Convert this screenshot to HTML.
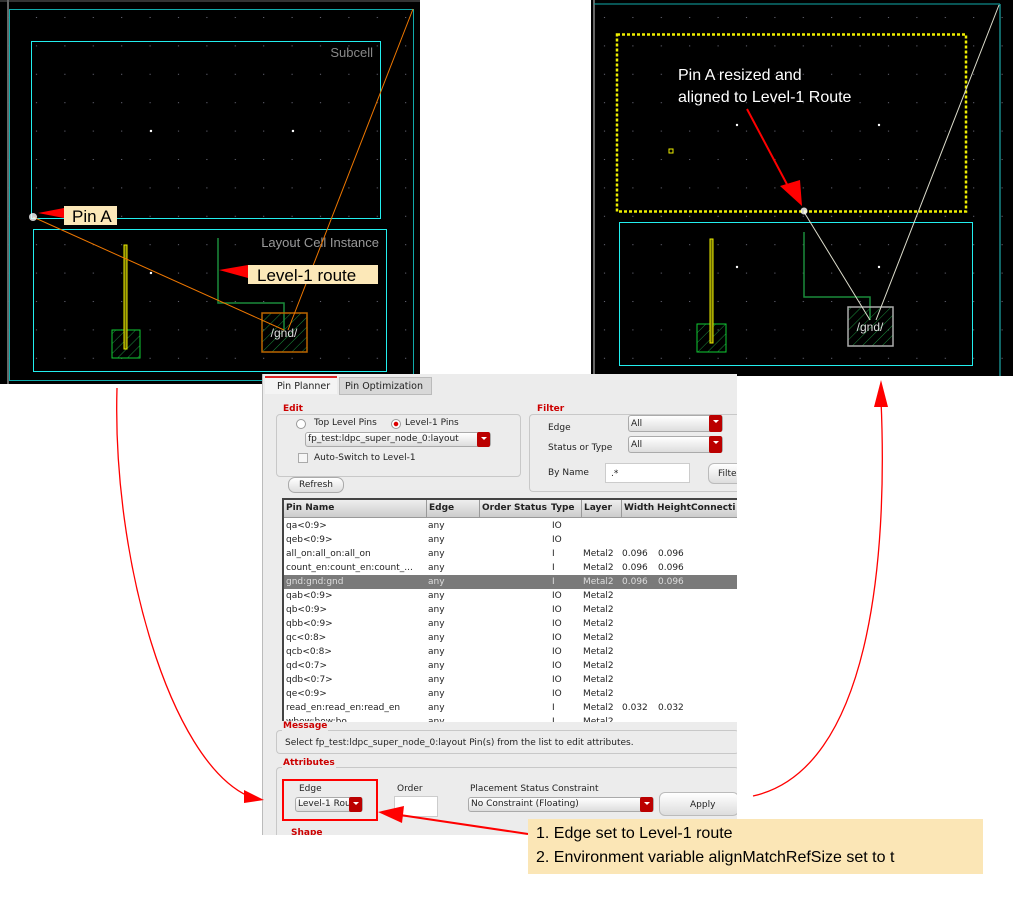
<!DOCTYPE html>
<html><head><meta charset="utf-8"><style>
body{margin:0;width:1013px;height:918px;background:#fff;position:relative;overflow:hidden;font-family:"Liberation Sans",sans-serif}
.a{position:absolute}
.dlg{font-family:"DejaVu Sans","Liberation Sans",sans-serif;font-size:9px;color:#222}
.sec{position:absolute;border:1px solid #c8c8c8;border-radius:4px}
.lbl{position:absolute;color:#c00;font-weight:bold;font-size:9px;background:#ececec;padding:0 1px}
.dd{position:absolute;background:linear-gradient(#fff,#ddd);border:1px solid #aaa;border-radius:3px;height:13px;font-size:9px;line-height:13px;padding-left:2px;box-sizing:border-box}
.dd b{position:absolute;right:0;top:-1px;width:13px;height:13px;background:#b00;border-radius:2px}
.dd b:after{content:"";position:absolute;left:4px;top:5px;border:3px solid transparent;border-top:3px solid #fff}
.row{position:absolute;left:0;height:14px;width:454px;font-size:9px;line-height:14px}
.row span{position:absolute}
</style></head><body>
<svg class="a" style="left:0;top:0" width="1013" height="918">
<defs>
<pattern id="dots" width="28.4" height="28.4" patternUnits="userSpaceOnUse" x="9" y="9"><rect x="27" y="8" width="1" height="1" fill="#778"/></pattern>
<pattern id="hatch" width="7" height="7" patternUnits="userSpaceOnUse" patternTransform="rotate(45)"><line x1="0" y1="0" x2="0" y2="7" stroke="#1a8a3a" stroke-width="1"/></pattern>
</defs>
<rect x="0" y="0" width="420" height="384" fill="#000"/>
<rect x="0" y="0" width="420" height="384" fill="url(#dots)"/>
<line x1="8" y1="0" x2="8" y2="384" stroke="#888" stroke-width="1.5"/>
<line x1="0" y1="1" x2="420" y2="1" stroke="#666"/>
<rect x="9.5" y="9.5" width="404" height="371" fill="none" stroke="#1aa" />
<rect x="31.5" y="41.5" width="349" height="177" fill="none" stroke="#2ee" />
<rect x="33.5" y="229.5" width="353" height="142" fill="none" stroke="#2ee" />
<text x="373" y="57" fill="#888" font-size="13" text-anchor="end">Subcell</text>
<text x="379" y="247" fill="#999" font-size="13" text-anchor="end">Layout Cell Instance</text>
<circle cx="151" cy="131" r="1.2" fill="#fff"/><circle cx="293" cy="131" r="1.2" fill="#fff"/><circle cx="151" cy="273" r="1.2" fill="#fff"/>
<rect x="112" y="330" width="28" height="28" fill="url(#hatch)" stroke="#1c3" />
<rect x="124" y="245" width="3" height="104" fill="#660" stroke="#ee0" stroke-width="1"/>
<polyline points="218,238 218,303 284,303 284,330" fill="none" stroke="#1a8a3a" stroke-width="1.5"/>
<rect x="262" y="313" width="45" height="39" fill="url(#hatch)" stroke="#b60" stroke-width="1.5"/>
<text x="284" y="337" fill="#ddd" font-size="12" text-anchor="middle">/gnd/</text>
<line x1="33" y1="217" x2="284" y2="330" stroke="#e70" stroke-width="1"/>
<line x1="413" y1="9" x2="288" y2="330" stroke="#e70" stroke-width="1"/>
<circle cx="33" cy="217" r="4" fill="#fff" opacity="0.8"/>
<polygon points="38,213 64,208 64,218" fill="#f00"/>
<rect x="64" y="206" width="53" height="19" fill="#fce8b8"/>
<text x="72" y="222" font-size="17" fill="#000">Pin A</text>
<polygon points="219,270 248,265 248,278" fill="#f00"/>
<rect x="248" y="265" width="130" height="19" fill="#fce8b8"/>
<text x="257" y="281" font-size="17" fill="#000">Level-1 route</text>
<rect x="591" y="0" width="422" height="376" fill="#000"/>
<rect x="591" y="0" width="422" height="376" fill="url(#dots)"/>
<line x1="594" y1="0" x2="594" y2="376" stroke="#888" stroke-width="1.5"/>
<line x1="594" y1="4" x2="1000" y2="4" stroke="#1aa"/>
<line x1="1000" y1="4" x2="1000" y2="376" stroke="#2cc"/>
<rect x="617" y="34.5" width="349" height="177" fill="none" stroke="#ee0" stroke-width="2.5" stroke-dasharray="3,2"/>
<rect x="619.5" y="222.5" width="353" height="143" fill="none" stroke="#2ee"/>
<circle cx="737" cy="125" r="1.2" fill="#fff"/><circle cx="879" cy="125" r="1.2" fill="#fff"/><circle cx="737" cy="267" r="1.2" fill="#fff"/><circle cx="879" cy="267" r="1.2" fill="#fff"/>
<rect x="669" y="149" width="4" height="4" fill="none" stroke="#ee0"/>
<rect x="697" y="324" width="29" height="28" fill="url(#hatch)" stroke="#1c3"/>
<rect x="710" y="239" width="3" height="104" fill="#660" stroke="#ee0"/>
<polyline points="804,232 804,297 870,297 870,320" fill="none" stroke="#1a8a3a" stroke-width="1.5"/>
<rect x="848" y="307" width="45" height="39" fill="url(#hatch)" stroke="#aaa" stroke-width="1.5"/>
<text x="870" y="331" fill="#ddd" font-size="12" text-anchor="middle">/gnd/</text>
<line x1="804" y1="212" x2="870" y2="320" stroke="#ddc" />
<line x1="999" y1="5" x2="876" y2="320" stroke="#ddc" />
<circle cx="804" cy="211" r="3.5" fill="#fff" opacity="0.8"/>
<text x="678" y="80" fill="#fff" font-size="16">Pin A resized and</text>
<text x="678" y="102" fill="#fff" font-size="16">aligned to Level-1 Route</text>
<line x1="747" y1="109" x2="790" y2="190" stroke="#f00" stroke-width="2"/>
<polygon points="780,186 800,180 802,206" fill="#f00"/>
</svg>

<div class="a dlg" style="left:262px;top:374px;width:474px;height:461px;background:#ececec;border-left:1px solid #bbb;overflow:hidden">
 <div class="a" style="left:2px;top:2px;width:72px;height:18px;background:#f4f4f4;border-top:2px solid #d22;font-size:9.5px;line-height:18px;padding-left:12px;box-sizing:border-box">Pin Planner</div>
 <div class="a" style="left:76px;top:3px;width:93px;height:18px;background:#d8d8d8;border:1px solid #bbb;font-size:9.5px;line-height:18px;padding-left:5px;box-sizing:border-box">Pin Optimization</div>
 <div class="sec" style="left:13px;top:40px;width:243px;height:61px"></div>
 <div class="lbl" style="left:19px;top:30px">Edit</div>
 <div class="a" style="left:33px;top:45px;width:8px;height:8px;border:1px solid #999;border-radius:50%;background:#fff"></div>
 <div class="a" style="left:51px;top:44px">Top Level Pins</div>
 <div class="a" style="left:128px;top:45px;width:8px;height:8px;border:1px solid #999;border-radius:50%;background:radial-gradient(#d00 35%,#fff 45%)"></div>
 <div class="a" style="left:142px;top:44px">Level-1 Pins</div>
 <div class="dd" style="left:42px;top:58px;width:186px;height:15px">fp_test:ldpc_super_node_0:layout<b style="height:15px"></b></div>
 <div class="a" style="left:35px;top:79px;width:8px;height:8px;border:1px solid #aaa;background:#f6f6f6"></div>
 <div class="a" style="left:51px;top:79px">Auto-Switch to Level-1</div>
 <div class="a" style="left:25px;top:103px;width:54px;height:14px;border:1px solid #aaa;border-radius:7px;background:linear-gradient(#fff,#ddd);text-align:center;line-height:14px">Refresh</div>
 <div class="sec" style="left:266px;top:40px;width:220px;height:76px;border-right:none"></div>
 <div class="lbl" style="left:273px;top:30px">Filter</div>
 <div class="a" style="left:285px;top:49px">Edge</div>
 <div class="dd" style="left:365px;top:41px;width:95px;height:17px;line-height:17px">All<b style="height:17px"></b></div>
 <div class="a" style="left:285px;top:69px">Status or Type</div>
 <div class="dd" style="left:365px;top:62px;width:95px;height:17px;line-height:17px">All<b style="height:17px"></b></div>
 <div class="a" style="left:285px;top:94px">By Name</div>
 <div class="a" style="left:342px;top:89px;width:85px;height:20px;background:#fff;border:1px solid #ccc;line-height:20px;padding-left:5px;box-sizing:border-box">.*</div>
 <div class="a" style="left:445px;top:89px;width:40px;height:21px;border:1px solid #bbb;border-radius:6px;background:linear-gradient(#fff,#ddd);line-height:21px;padding-left:9px;box-sizing:border-box">Filte</div>
 <div class="a" style="left:19px;top:124px;width:455px;height:222px;background:#fff;border-left:2px solid #444;border-top:2px solid #444;overflow:hidden">
  <div class="row" style="top:0;height:17px;background:linear-gradient(#eee,#ccc);font-weight:bold;line-height:17px;border-bottom:1px solid #999">
   <span style="left:2px">Pin Name</span><span style="left:142px;border-left:1px solid #999;padding-left:2px;width:50px">Edge</span><span style="left:195px;border-left:1px solid #999;padding-left:2px">Order</span><span style="left:230px">Status</span><span style="left:267px">Type</span><span style="left:297px;border-left:1px solid #999;padding-left:2px">Layer</span><span style="left:337px;border-left:1px solid #999;padding-left:2px">Width</span><span style="left:373px">Height</span><span style="left:407px">Connecti</span>
  </div>
  <div class="row" style="top:19px"><span style="left:2px">qa&lt;0:9&gt;</span><span style="left:144px">any</span><span style="left:268px">IO</span></div>
  <div class="row" style="top:33px"><span style="left:2px">qeb&lt;0:9&gt;</span><span style="left:144px">any</span><span style="left:268px">IO</span></div>
  <div class="row" style="top:47px"><span style="left:2px">all_on:all_on:all_on</span><span style="left:144px">any</span><span style="left:268px">I</span><span style="left:299px">Metal2</span><span style="left:338px">0.096</span><span style="left:374px">0.096</span></div>
  <div class="row" style="top:61px"><span style="left:2px">count_en:count_en:count_...</span><span style="left:144px">any</span><span style="left:268px">I</span><span style="left:299px">Metal2</span><span style="left:338px">0.096</span><span style="left:374px">0.096</span></div>
  <div class="row" style="top:75px;background:#7a7a7a;color:#ddd"><span style="left:2px">gnd:gnd:gnd</span><span style="left:144px">any</span><span style="left:268px">I</span><span style="left:299px">Metal2</span><span style="left:338px">0.096</span><span style="left:374px">0.096</span></div>
  <div class="row" style="top:89px"><span style="left:2px">qab&lt;0:9&gt;</span><span style="left:144px">any</span><span style="left:268px">IO</span><span style="left:299px">Metal2</span></div>
  <div class="row" style="top:103px"><span style="left:2px">qb&lt;0:9&gt;</span><span style="left:144px">any</span><span style="left:268px">IO</span><span style="left:299px">Metal2</span></div>
  <div class="row" style="top:117px"><span style="left:2px">qbb&lt;0:9&gt;</span><span style="left:144px">any</span><span style="left:268px">IO</span><span style="left:299px">Metal2</span></div>
  <div class="row" style="top:131px"><span style="left:2px">qc&lt;0:8&gt;</span><span style="left:144px">any</span><span style="left:268px">IO</span><span style="left:299px">Metal2</span></div>
  <div class="row" style="top:145px"><span style="left:2px">qcb&lt;0:8&gt;</span><span style="left:144px">any</span><span style="left:268px">IO</span><span style="left:299px">Metal2</span></div>
  <div class="row" style="top:159px"><span style="left:2px">qd&lt;0:7&gt;</span><span style="left:144px">any</span><span style="left:268px">IO</span><span style="left:299px">Metal2</span></div>
  <div class="row" style="top:173px"><span style="left:2px">qdb&lt;0:7&gt;</span><span style="left:144px">any</span><span style="left:268px">IO</span><span style="left:299px">Metal2</span></div>
  <div class="row" style="top:187px"><span style="left:2px">qe&lt;0:9&gt;</span><span style="left:144px">any</span><span style="left:268px">IO</span><span style="left:299px">Metal2</span></div>
  <div class="row" style="top:201px"><span style="left:2px">read_en:read_en:read_en</span><span style="left:144px">any</span><span style="left:268px">I</span><span style="left:299px">Metal2</span><span style="left:338px">0.032</span><span style="left:374px">0.032</span></div>
  <div class="row" style="top:215px"><span style="left:2px">wbow:bow:bo</span><span style="left:144px">any</span><span style="left:268px">I</span><span style="left:299px">Metal2</span></div>
 </div>
 <div class="sec" style="left:13px;top:356px;width:462px;height:22px;border-right:none"></div>
 <div class="lbl" style="left:19px;top:347px">Message</div>
 <div class="a" style="left:22px;top:364px">Select fp_test:ldpc_super_node_0:layout Pin(s) from the list to edit attributes.</div>
 <div class="sec" style="left:13px;top:393px;width:462px;height:80px;border-right:none"></div>
 <div class="lbl" style="left:19px;top:384px">Attributes</div>
 <div class="a" style="left:36px;top:410px">Edge</div>
 <div class="dd" style="left:32px;top:423px;width:68px;height:15px">Level-1 Rou<b style="height:15px"></b></div>
 <div class="a" style="left:134px;top:410px">Order</div>
 <div class="a" style="left:131px;top:422px;width:42px;height:19px;background:#fff;border:1px solid #ccc"></div>
 <div class="a" style="left:207px;top:410px">Placement Status Constraint</div>
 <div class="dd" style="left:205px;top:423px;width:186px;height:15px">No Constraint (Floating)<b style="height:15px"></b></div>
 <div class="a" style="left:396px;top:418px;width:80px;height:24px;border:1px solid #bbb;border-radius:6px;background:linear-gradient(#fff,#ddd);line-height:24px;padding-left:30px;box-sizing:border-box">Apply</div>
 <div class="lbl" style="left:27px;top:454px">Shape</div>
</div>

<svg class="a" style="left:0;top:0" width="1013" height="918">
<rect x="283" y="780" width="94" height="40" fill="none" stroke="#f00" stroke-width="2"/>
<path d="M117,388 C112,560 170,760 248,796" fill="none" stroke="#f00" stroke-width="1.3"/>
<polygon points="244,790 264,800 244,803" fill="#f00"/>
<path d="M753,796 C870,770 888,560 881,400" fill="none" stroke="#f00" stroke-width="1.3"/>
<polygon points="874,407 881,380 888,407" fill="#f00"/>
<line x1="528" y1="834" x2="400" y2="815" stroke="#f00" stroke-width="2"/>
<polygon points="378,812 404,806 402,823" fill="#f00"/>
<rect x="528" y="819" width="455" height="55" fill="#fbe6b6"/>
<text x="536" y="838" font-size="16" fill="#000">1. Edge set to Level-1 route</text>
<text x="536" y="862" font-size="16" fill="#000">2. Environment variable alignMatchRefSize set to t</text>
</svg>
</body></html>
